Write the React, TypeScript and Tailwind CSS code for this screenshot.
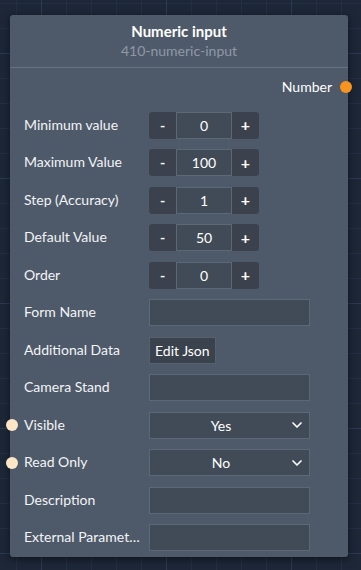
import { ChevronDown } from "lucide-react";

const STEPPERS = [
  { label: "Minimum value", value: "0" },
  { label: "Maximum Value", value: "100" },
  { label: "Step (Accuracy)", value: "1" },
  { label: "Default Value", value: "50" },
  { label: "Order", value: "0" },
];

function Row({ label, dot, children }: { label: string; dot?: boolean; children: React.ReactNode }) {
  return (
    <div className="relative flex items-center h-[37.5px]">
      {dot && <span className="absolute -left-[4px] top-1/2 -translate-y-1/2 w-3 h-3 rounded-full bg-[#fde6c6]" />}
      <div className="w-[139px] pl-[14px] pr-[6px] text-[14px] text-[#f3f4f6] whitespace-nowrap overflow-hidden text-ellipsis -mt-[2px]">
        {label}
      </div>
      {children}
    </div>
  );
}

function Stepper({ value }: { value: string }) {
  return (
    <div className="flex h-[27px] text-[14px] text-white">
      <button className="w-[27px] bg-[#3b424d] rounded-l-[3px] font-bold">-</button>
      <div className="w-[56px] bg-[#414b58] border border-[#5d6877] flex items-center justify-center">{value}</div>
      <button className="w-[27px] bg-[#3b424d] rounded-r-[3px] font-bold text-[16px]">+</button>
    </div>
  );
}

function TextBox() {
  return <div className="w-[161px] h-[27px] bg-[#414b58] border border-[#5d6877]" />;
}

function Select({ value }: { value: string }) {
  return (
    <div className="relative w-[161px] h-[27px] bg-[#414b58] border border-[#5d6877] flex items-center justify-center pr-[17px] text-[14px] text-white">
      {value}
      <ChevronDown className="absolute right-[4px] w-4 h-4" strokeWidth={2.5} />
    </div>
  );
}

export default function App() {
  return (
    <div
      className="w-[361px] h-[570px] overflow-hidden pt-[15px] pl-[10px] bg-[#1d2738] bg-[linear-gradient(#2c3a52_1px,transparent_1px),linear-gradient(90deg,#2c3a52_1px,transparent_1px),linear-gradient(#232f43_1px,transparent_1px),linear-gradient(90deg,#232f43_1px,transparent_1px)] bg-[size:125px_125px,125px_125px,25px_25px,25px_25px] bg-[position:41px_53px,41px_53px,16px_3px,16px_3px]"
      style={{ fontFamily: "Lato, 'Noto Sans', sans-serif" }}
    >
      <div className="w-[338px] h-[542px] bg-[#4e5a6a] rounded-[3px] shadow-[0_2px_8px_rgba(0,0,0,0.5)]">
        <div className="pt-[6px] pb-[7px] text-center">
          <div className="text-[15px] font-bold text-white leading-[20px]">Numeric input</div>
          <div className="text-[14px] text-[#8e99a6] leading-[18px] mt-[1px]">410-numeric-input</div>
        </div>
        <div className="h-px bg-[#67727f]" />
        <div className="relative flex justify-end items-center h-[37px] pr-[16px] text-[14px] text-white">
          Number
          <span className="absolute -right-[4px] top-1/2 -translate-y-1/2 w-3 h-3 rounded-full bg-[#f7931e]" />
        </div>
        <div className="pt-[1.5px]">
          {STEPPERS.map((s) => (
            <Row key={s.label} label={s.label}>
              <Stepper value={s.value} />
            </Row>
          ))}
          <Row label="Form Name">
            <TextBox />
          </Row>
          <Row label="Additional Data">
            <button className="h-[27px] px-[5px] bg-[#3a424d] border border-[#56616f] text-[14px] text-white">Edit Json</button>
          </Row>
          <Row label="Camera Stand">
            <TextBox />
          </Row>
          <Row label="Visible" dot>
            <Select value="Yes" />
          </Row>
          <Row label="Read Only" dot>
            <Select value="No" />
          </Row>
          <Row label="Description">
            <TextBox />
          </Row>
          <Row label="External Parameters">
            <TextBox />
          </Row>
        </div>
      </div>
    </div>
  );
}
